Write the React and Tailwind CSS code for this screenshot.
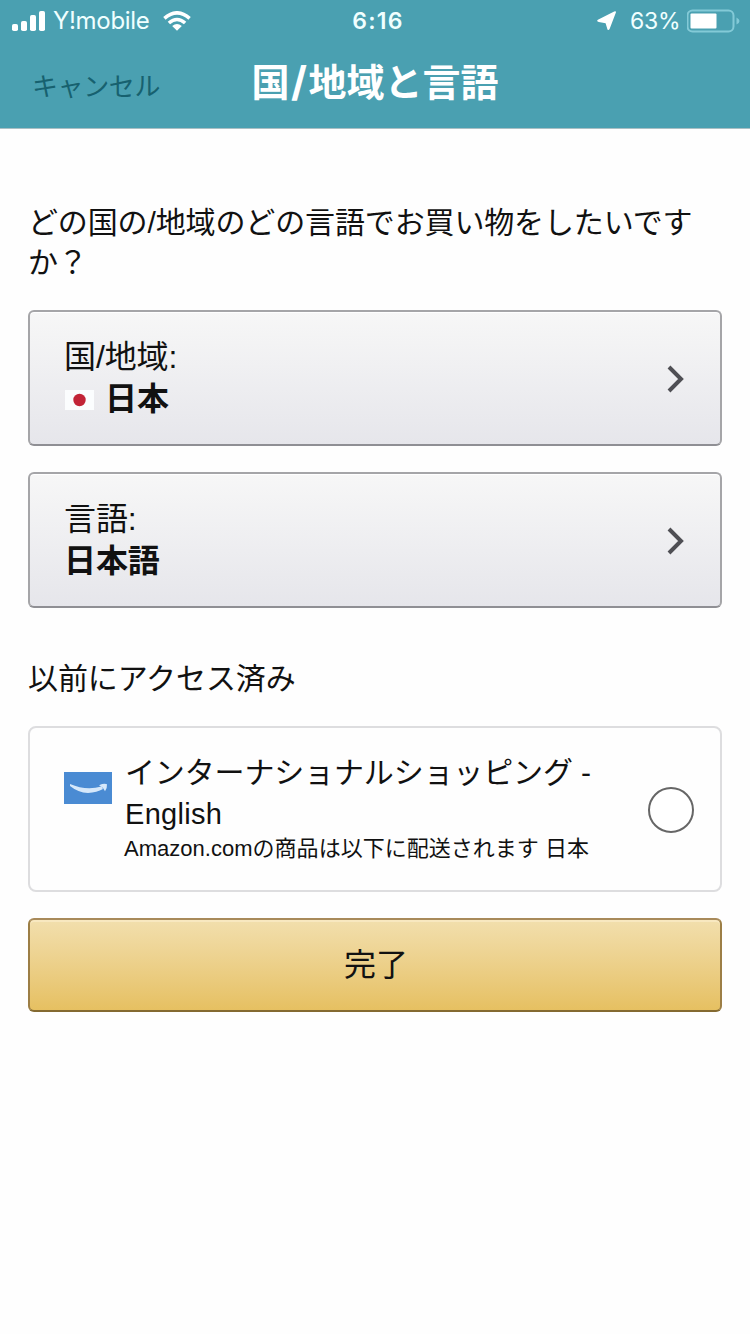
const sans = "font-['Liberation_Sans','Noto_Sans_CJK_JP',sans-serif]";

function StatusBar() {
    return (
        <div className="flex h-[41px] items-center pl-3 pr-3 font-['Inter',sans-serif] text-2xl leading-10 text-[#f0ffff]">
            <div className="flex flex-1 items-center">
                <svg width="34" height="20" viewBox="0 0 34 20" fill="white">
                    <rect x="0" y="13" width="6" height="7" rx="1.8" />
                    <rect x="9" y="10" width="6" height="10" rx="1.8" />
                    <rect x="18" y="4" width="6" height="16" rx="1.8" />
                    <rect x="27" y="0" width="6" height="20" rx="1.8" />
                </svg>
                <span className="ml-[7px] w-[98px] whitespace-nowrap text-[24px] tracking-[-0.3px]">Y!mobile</span>
                <svg className="ml-3" width="28" height="20" viewBox="0 0 28 20" fill="none" stroke="white" strokeWidth="3.6">
                    <path d="M1.4 7.3Q14 -3.6 26.6 7.3" />
                    <path d="M5.9 12Q14 5 22.1 12" />
                    <path d="M14 19.8 9.2 15Q14 11.2 18.8 15Z" fill="white" stroke="none" />
                </svg>
            </div>
            <span className="ml-[6px] text-[23px] font-semibold tracking-[1.3px]">6:16</span>
            <div className="flex flex-1 items-center justify-end">
                <svg width="20" height="20" viewBox="0 0 20 20" fill="white">
                    <path d="M18.9 1.5 12.6 18Q11.4 20 10.4 18.2L8.6 12.2 1.8 11Q-0.9 9.9 0.9 8.7L17.2 0.5Q19.3 -0.3 18.9 1.5Z" />
                </svg>
                <span className="ml-[13px] w-[53px] whitespace-nowrap text-[23px] tracking-[-0.2px]">63%</span>
                <svg className="-mr-0.5 ml-[4px]" width="53" height="24" viewBox="0 0 53 24">
                    <rect x="0.5" y="1.5" width="46" height="21" rx="5" fill="none" stroke="#83cad7" strokeWidth="2" />
                    <rect x="3.5" y="4.5" width="26" height="15" rx="1" fill="white" />
                    <path d="M49.5 8.5Q52.5 10 52.5 12T49.5 15.5Z" fill="#83cad7" />
                </svg>
            </div>
        </div>
    );
}

function Header() {
    return (
        <header className="h-[129px] border-b border-[#a9bfc4] bg-[#4aa0b1]">
            <StatusBar />
            <div className="grid h-[87px] grid-cols-[1fr_auto_1fr] items-center font-['Noto_Sans_CJK_JP',sans-serif]">
                <button className="pl-8 text-left text-[26px] leading-10 tracking-[-0.4px] text-[#17616f]">キャンセル</button>
                <h1 className="flex h-[58px] items-center pb-[9px] text-[38px] font-bold leading-[56px] text-white">
                    国
                    <span className="w-[19px] pt-[2px] text-center font-['Inter',sans-serif] text-[41px]">/</span>
                    地域と言語
                </h1>
            </div>
        </header>
    );
}

function Chevron() {
    return (
        <svg className="mt-[2px]" width="18" height="28" viewBox="0 0 18 28" fill="none" stroke="#4f4f54" strokeWidth="4">
            <path d="M3 2 15 14 3 26" />
        </svg>
    );
}

function JapanFlag() {
    return (
        <svg className="mr-[11px] mt-[2px]" width="30" height="22" viewBox="0 0 30 22">
            <rect x="1" y="1" width="29" height="20" fill="#fbfdfe" />
            <circle cx="15.5" cy="11" r="6.2" fill="#c22437" />
        </svg>
    );
}

function SelectCard({ label, value, icon }) {
    return (
        <button className="flex h-[136px] w-full items-center justify-between rounded-md border-2 border-[#a5a5a8] border-b-[#8f8f94] bg-linear-to-b from-[#f7f7f7] to-[#e6e6eb] pl-[34px] pr-9 text-left text-[32px] leading-[42px] text-[#111] shadow-[inset_0_1px_0_#fff]">
            <span>
                <span className="block tracking-[-0.1px]">{label}</span>
                <span className="flex items-center font-bold tracking-[-0.1px]">
                    {icon}
                    {value}
                </span>
            </span>
            <Chevron />
        </button>
    );
}

function SmileLogo() {
    return (
        <svg className="mt-5 shrink-0" width="48" height="32" viewBox="0 0 48 32">
            <rect width="48" height="32" fill="#4a8bd3" />
            <path d="M6 12Q22 19 37.5 14.5L39 17Q33 20.5 24 21 14 20.5 6 14Z" fill="#d6e8fa" />
            <path d="M35 13.2Q40 11.2 43 12.2 43.4 15.5 41 19.2L39 16Z" fill="#d6e8fa" />
        </svg>
    );
}

function PreviousOption() {
    return (
        <label className="flex h-[166px] items-center justify-between rounded-lg border-2 border-[#dddddf] pl-[34px] pr-[26px]">
            <span className="flex items-start pb-1">
                <SmileLogo />
                <span className="ml-[13px] text-[#111]">
                    <span className="block text-[30px] leading-[41px] tracking-[-0.15px]">
                        インターナショナルショッピング -<br />
                        <span className="text-[29px] tracking-[0.3px]">English</span>
                    </span>
                    <span className="-ml-px block text-[22px] leading-7 tracking-[0.02px]">Amazon.comの商品は以下に配送されます 日本</span>
                </span>
            </span>
            <span className="mt-[2px] size-[46px] rounded-full border-2 border-[#666] bg-white" />
        </label>
    );
}

export default function App() {
    return (
        <div className={`min-h-[1334px] w-[750px] bg-[#fefefe] ${sans}`}>
            <Header />
            <main className="px-7 pt-[74px] text-[#111]">
                <p className="text-[30px] leading-10 tracking-[-0.13px]">どの国の/地域のどの言語でお買い物をしたいですか？</p>
                <div className="mt-[27px] flex flex-col gap-[26px]">
                    <SelectCard label="国/地域:" value="日本" icon={<JapanFlag />} />
                    <SelectCard label="言語:" value="日本語" />
                </div>
                <h2 className="mb-[27px] mt-[51px] text-[30px] leading-10 tracking-[-0.1px]">以前にアクセス済み</h2>
                <PreviousOption />
                <button className="mt-[26px] h-[94px] w-full rounded-md border-2 border-[#9c7e45] border-t-[#a88a5a] border-b-[#846a31] bg-linear-to-b from-[#f2dfad] to-[#e6c061] pl-[2px] text-[32px] text-[#111] shadow-[inset_0_2px_0_#f8e8c0]">
                    完了
                </button>
            </main>
        </div>
    );
}
